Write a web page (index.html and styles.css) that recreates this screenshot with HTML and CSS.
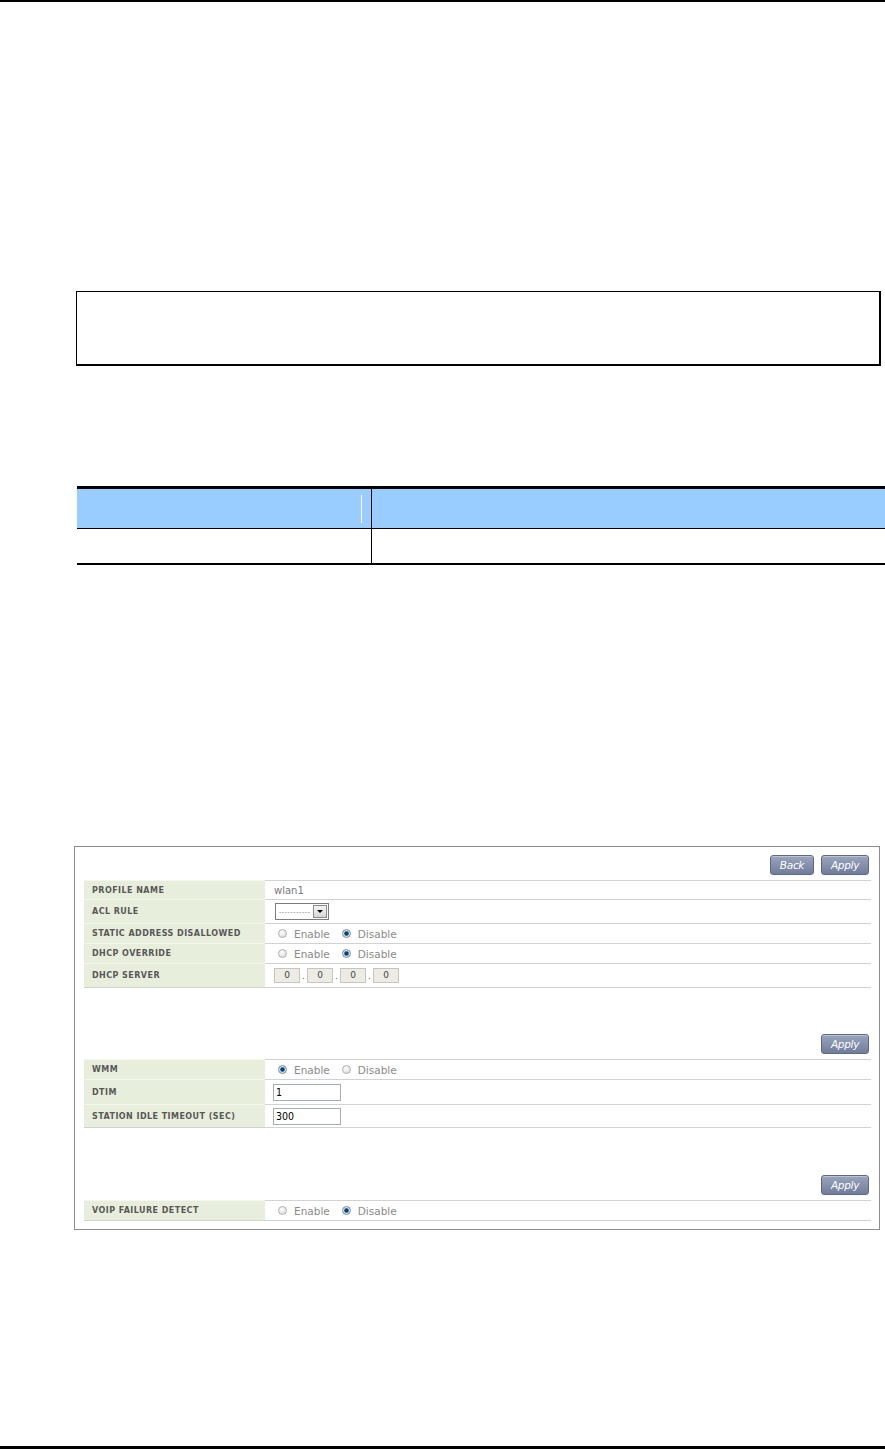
FILE: index.html
```html
<!DOCTYPE html>
<html lang="en">
  <head>
    <meta charset="UTF-8" />
    <meta name="viewport" content="width=device-width, initial-scale=1.0" />
    <title>WLAN Profile</title>
    <link rel="stylesheet" href="styles.css">
  </head>
  <body>
    <div class="rule-top"></div>

    <!-- start note box -->
    <div class="note-box"></div>
    <!-- end note box -->

    <!-- start doc table -->
    <div class="doc-table">
      <div class="doc-th doc-first"><span class="th-mark"></span></div>
      <div class="doc-th"></div>
      <div class="doc-td doc-first"></div>
      <div class="doc-td"></div>
    </div>
    <!-- end doc table -->

    <!-- start panel -->
    <div class="panel">
      <div class="btn-bar">
        <button class="ui-btn btn-back">Back</button>
        <button class="ui-btn btn-apply">Apply</button>
      </div>
      <div class="form-table">
        <div class="form-row row-18">
          <div class="form-label">PROFILE NAME</div>
          <div class="form-value"><span class="plain-value">wlan1</span></div>
        </div>
        <div class="form-row row-23">
          <div class="form-label">ACL RULE</div>
          <div class="form-value">
            <div class="fake-select">
              <span class="sel-dashes">- - - - - - - - - - -</span>
              <span class="sel-arrow"></span>
            </div>
          </div>
        </div>
        <div class="form-row row-19">
          <div class="form-label">STATIC ADDRESS DISALLOWED</div>
          <div class="form-value">
            <div class="radio-group">
              <span class="radio"></span><span class="radio-text">Enable</span>
              <span class="radio is-on"></span><span class="radio-text">Disable</span>
            </div>
          </div>
        </div>
        <div class="form-row row-19">
          <div class="form-label">DHCP OVERRIDE</div>
          <div class="form-value">
            <div class="radio-group">
              <span class="radio"></span><span class="radio-text">Enable</span>
              <span class="radio is-on"></span><span class="radio-text">Disable</span>
            </div>
          </div>
        </div>
        <div class="form-row row-23">
          <div class="form-label">DHCP SERVER</div>
          <div class="form-value">
            <div class="ip-group">
              <span class="ip-box">0</span><span class="ip-dot">.</span>
              <span class="ip-box">0</span><span class="ip-dot">.</span>
              <span class="ip-box">0</span><span class="ip-dot">.</span>
              <span class="ip-box">0</span>
            </div>
          </div>
        </div>
      </div>

      <div class="btn-bar bar-2">
        <button class="ui-btn btn-apply">Apply</button>
      </div>
      <div class="form-table">
        <div class="form-row row-19">
          <div class="form-label">WMM</div>
          <div class="form-value">
            <div class="radio-group">
              <span class="radio is-on"></span><span class="radio-text">Enable</span>
              <span class="radio"></span><span class="radio-text">Disable</span>
            </div>
          </div>
        </div>
        <div class="form-row row-24">
          <div class="form-label">DTIM</div>
          <div class="form-value"><input class="text-input" type="text" value="1" /></div>
        </div>
        <div class="form-row row-22">
          <div class="form-label">STATION IDLE TIMEOUT (SEC)</div>
          <div class="form-value"><input class="text-input" type="text" value="300" /></div>
        </div>
      </div>

      <div class="btn-bar bar-3">
        <button class="ui-btn btn-apply">Apply</button>
      </div>
      <div class="form-table">
        <div class="form-row row-19">
          <div class="form-label">VOIP FAILURE DETECT</div>
          <div class="form-value">
            <div class="radio-group">
              <span class="radio"></span><span class="radio-text">Enable</span>
              <span class="radio is-on"></span><span class="radio-text">Disable</span>
            </div>
          </div>
        </div>
      </div>
    </div>
    <!-- end panel -->

    <div class="rule-bottom"></div>
  </body>
</html>
```

FILE: styles.css
```css
body {
  margin: 0;
  background-color: white;
  font-family: "DejaVu Sans", Verdana, sans-serif;
}
.rule-top {
  height: 2px;
  background-color: black;
}
.rule-bottom {
  margin-top: 216px;
  height: 3px;
  background-color: black;
}
.note-box {
  box-sizing: border-box;
  margin: 289px 0 0 76px;
  width: 805px;
  height: 75px;
  border: 1px solid black;
  border-width: 1px 2px 2px 1px;
}
.doc-table {
  margin: 120px 0 0 77px;
  display: grid;
  grid-template-columns: 295px 1fr;
  border-top: 3px solid black;
  border-bottom: 2px solid black;
}
.doc-th {
  height: 39px;
  background-color: #99ccff;
  border-bottom: 1px solid black;
}
.doc-td {
  height: 34px;
}
.doc-first {
  border-right: 1px solid black;
}
.doc-th.doc-first {
  display: flex;
  justify-content: flex-end;
  align-items: center;
  padding-right: 9px;
}
.th-mark {
  width: 1px;
  height: 28px;
  background-color: white;
}
.panel {
  box-sizing: border-box;
  margin: 281px 0 0 74px;
  width: 806px;
  border: 1px solid #8c8c8c;
  padding: 8px 8px 8px 9px;
}
.btn-bar {
  display: flex;
  justify-content: flex-end;
  gap: 7px;
  padding-right: 2px;
  margin-bottom: 5px;
}
.bar-2 {
  margin-top: 46px;
}
.bar-3 {
  margin-top: 47px;
}
.ui-btn {
  box-sizing: border-box;
  height: 20px;
  padding: 0;
  border: 1px solid #5e6985;
  border-radius: 3px;
  background: linear-gradient(#9aa4bd, #707d9b);
  box-shadow: inset 0 1px 0 rgba(255, 255, 255, 0.35);
  color: white;
  font-family: "DejaVu Sans", Verdana, sans-serif;
  font-style: italic;
  font-size: 10.5px;
  letter-spacing: -0.3px;
}
.btn-back {
  width: 44px;
}
.btn-apply {
  width: 48px;
}
.form-table {
  border-bottom: 1px solid #d2d2d2;
}
.form-row {
  display: grid;
  grid-template-columns: 181px 1fr;
}
.form-label {
  display: flex;
  align-items: center;
  padding-left: 8px;
  background-color: #e8eedc;
  border-top: 1px solid #f4f7ee;
  color: #585858;
  font-size: 8px;
  font-weight: bold;
  letter-spacing: 0.45px;
}
.form-value {
  display: flex;
  align-items: center;
  padding-left: 8px;
  border-top: 1px solid #d2d2d2;
}
.row-18 > div { height: 18px; }
.row-19 > div { height: 19px; }
.row-22 > div { height: 22px; }
.row-23 > div { height: 23px; }
.row-24 > div { height: 24px; }
.plain-value {
  padding-left: 1px;
  color: #7a7a7a;
  font-size: 10px;
}
.fake-select {
  box-sizing: border-box;
  margin-left: 2px;
  width: 54px;
  height: 17px;
  border: 1px solid #7c7c7c;
  display: flex;
  align-items: center;
  justify-content: space-between;
  padding: 0 1px 0 3px;
  background-color: white;
}
.sel-dashes {
  color: #555555;
  font-size: 6px;
  letter-spacing: -0.6px;
  white-space: nowrap;
}
.sel-arrow {
  box-sizing: border-box;
  width: 14px;
  height: 13px;
  border: 1px solid #8a8a8a;
  background: linear-gradient(#f6f6f6, #d6d6d6);
  display: flex;
  align-items: center;
  justify-content: center;
}
.sel-arrow::after {
  content: "";
  border-left: 3px solid transparent;
  border-right: 3px solid transparent;
  border-top: 3px solid black;
}
.radio-group {
  display: flex;
  align-items: center;
  margin-left: 5px;
}
.radio {
  box-sizing: border-box;
  width: 9px;
  height: 9px;
  border-radius: 50%;
  border: 1px solid #b0b0b0;
  background: radial-gradient(circle at 40% 35%, #ffffff, #d4d4d4);
}
.radio.is-on {
  border-color: #7a8896;
  background: radial-gradient(circle, #0b3f6e 0 1.6px, #4f94c8 2.2px, #e6e6e6 3px);
}
.radio-text {
  margin: 0 12px 0 7px;
  color: #8a8a8a;
  font-size: 10.5px;
}
.ip-group {
  display: flex;
  align-items: center;
  margin-left: 1px;
}
.ip-box {
  box-sizing: border-box;
  width: 26px;
  height: 15px;
  border: 1px solid #c6c6be;
  background-color: #edece4;
  color: #444444;
  font-size: 9px;
  text-align: center;
  line-height: 13px;
}
.ip-dot {
  width: 7px;
  text-align: center;
  color: #666666;
  font-size: 9px;
}
.text-input {
  box-sizing: border-box;
  width: 68px;
  height: 17px;
  margin: 0;
  padding: 0 2px;
  border: 1px solid #a5acb2;
  color: black;
  font-family: "DejaVu Sans Condensed", Tahoma, sans-serif;
  font-size: 10.5px;
}
```
